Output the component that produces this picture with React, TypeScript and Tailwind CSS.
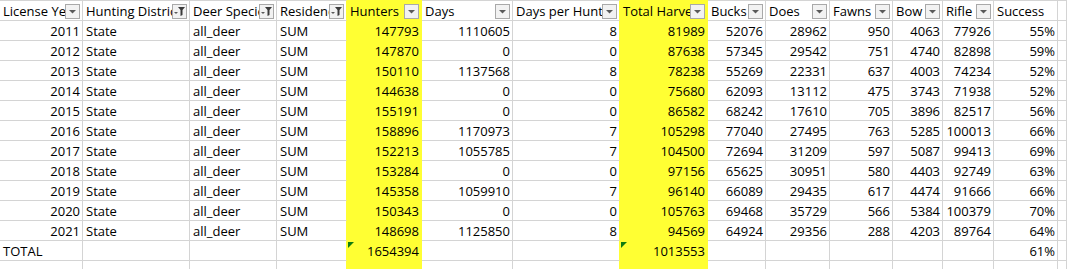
import React from "react";

type Col = { label: string; filter: "none" | "arrow" | "funnel"; yellow?: boolean; rightYellow?: boolean };

const cols: Col[] = [
  { label: "License Year", filter: "arrow" },
  { label: "Hunting District", filter: "funnel" },
  { label: "Deer Species", filter: "funnel" },
  { label: "Residency", filter: "funnel", rightYellow: true },
  { label: "Hunters", filter: "arrow", yellow: true },
  { label: "Days", filter: "arrow" },
  { label: "Days per Hunter", filter: "arrow", rightYellow: true },
  { label: "Total Harvest", filter: "arrow", yellow: true },
  { label: "Bucks", filter: "arrow" },
  { label: "Does", filter: "arrow" },
  { label: "Fawns", filter: "arrow" },
  { label: "Bow", filter: "arrow" },
  { label: "Rifle", filter: "arrow" },
  { label: "Success", filter: "none" },
  { label: "", filter: "none" },
];

const rows: (string | number)[][] = [
  [2011, "State", "all_deer", "SUM", 147793, 1110605, 8, 81989, 52076, 28962, 950, 4063, 77926, "55%"],
  [2012, "State", "all_deer", "SUM", 147870, 0, 0, 87638, 57345, 29542, 751, 4740, 82898, "59%"],
  [2013, "State", "all_deer", "SUM", 150110, 1137568, 8, 78238, 55269, 22331, 637, 4003, 74234, "52%"],
  [2014, "State", "all_deer", "SUM", 144638, 0, 0, 75680, 62093, 13112, 475, 3743, 71938, "52%"],
  [2015, "State", "all_deer", "SUM", 155191, 0, 0, 86582, 68242, 17610, 705, 3896, 82517, "56%"],
  [2016, "State", "all_deer", "SUM", 158896, 1170973, 7, 105298, 77040, 27495, 763, 5285, 100013, "66%"],
  [2017, "State", "all_deer", "SUM", 152213, 1055785, 7, 104500, 72694, 31209, 597, 5087, 99413, "69%"],
  [2018, "State", "all_deer", "SUM", 153284, 0, 0, 97156, 65625, 30951, 580, 4403, 92749, "63%"],
  [2019, "State", "all_deer", "SUM", 145358, 1059910, 7, 96140, 66089, 29435, 617, 4474, 91666, "66%"],
  [2020, "State", "all_deer", "SUM", 150343, 0, 0, 105763, 69468, 35729, 566, 5384, 100379, "70%"],
  [2021, "State", "all_deer", "SUM", 148698, 1125850, 8, 94569, 64924, 29356, 288, 4203, 89764, "64%"],
];

const totalRow: (string | number)[] = ["TOTAL", "", "", "", 1654394, "", "", 1013553, "", "", "", "", "", "61%"];

function FilterButton({ kind }: { kind: "arrow" | "funnel" }) {
  return (
    <div className="absolute right-[2px] top-[3px] w-[15px] h-[15px] border border-[#a9a9a9] bg-[#f2f2f2] flex items-center justify-center">
      {kind === "arrow" ? (
        <svg width="13" height="13" viewBox="0 0 13 13">
          <polygon points="3,5 10,5 6.5,8.5" fill="#5a5a5a" />
        </svg>
      ) : (
        <svg width="13" height="13" viewBox="0 0 13 13">
          <polygon points="1,7 5,7 3,9" fill="#5a5a5a" />
          <polygon points="5,2 12,2 9.5,5 9.5,10 7.5,11 7.5,5" fill="#3a3a3a" />
        </svg>
      )}
    </div>
  );
}

function GreenTri() {
  return (
    <svg className="absolute left-[1px] top-[1px]" width="6" height="6" viewBox="0 0 6 6">
      <polygon points="0,0 6,0 0,6" fill="#107c10" />
    </svg>
  );
}

function borderClasses(c: Col) {
  const right = c.yellow || c.rightYellow ? "border-r-[#ffff33]" : "border-r-[#d4d4d4]";
  const bottom = c.yellow ? "border-b-[#ffff33]" : "border-b-[#d4d4d4]";
  const bg = c.yellow ? "bg-[#ffff33]" : "bg-white";
  return `${right} ${bottom} ${bg}`;
}

export default function App() {
  return (
    <div
      className="w-[1067px] h-[269px] overflow-hidden bg-white text-black text-[13px]"
      style={{ fontFamily: '"Open Sans", "Noto Sans", sans-serif' }}
    >
      <div className="grid grid-cols-[83px_107px_87px_70px_75px_91px_107px_88px_58px_64px_63px_50px_51px_64px_1fr]">
        {cols.map((c, i) => (
          <div
            key={"h" + i}
            className={`relative h-[21px] border-t border-r border-b overflow-hidden ${borderClasses(c)} ${
              c.yellow ? "border-t-[#ffff33]" : "border-t-[#d4d4d4]"
            }`}
          >
            <div className="pl-[3px] pt-[1px] leading-[19px] whitespace-nowrap">{c.label}</div>
            {c.filter !== "none" && <FilterButton kind={c.filter} />}
          </div>
        ))}
        {rows.map((r, ri) =>
          cols.map((c, ci) => {
            const v = ci < r.length ? r[ci] : "";
            const isNum = typeof v === "number" || (typeof v === "string" && v.endsWith("%"));
            return (
              <div
                key={ri + "-" + ci}
                className={`relative h-[20px] border-r border-b overflow-hidden ${borderClasses(c)}`}
              >
                <div
                  className={`pt-[1px] leading-[19px] whitespace-nowrap ${
                    isNum ? "text-right pr-[2px]" : "text-left pl-[3px]"
                  }`}
                >
                  {v}
                </div>
              </div>
            );
          })
        )}
        {cols.map((c, ci) => {
          const v = ci < totalRow.length ? totalRow[ci] : "";
          const isNum = typeof v === "number" || (typeof v === "string" && v.endsWith("%"));
          return (
            <div key={"t" + ci} className={`relative h-[20px] border-r border-b overflow-hidden ${borderClasses(c)}`}>
              {c.yellow && <GreenTri />}
              <div
                className={`pt-[1px] leading-[19px] whitespace-nowrap ${
                  isNum ? "text-right pr-[2px]" : "text-left pl-[3px]"
                }`}
              >
                {v}
              </div>
            </div>
          );
        })}
        {cols.map((c, ci) => (
          <div key={"e" + ci} className={`relative h-[20px] border-r border-b ${borderClasses(c)}`} />
        ))}
      </div>
    </div>
  );
}
